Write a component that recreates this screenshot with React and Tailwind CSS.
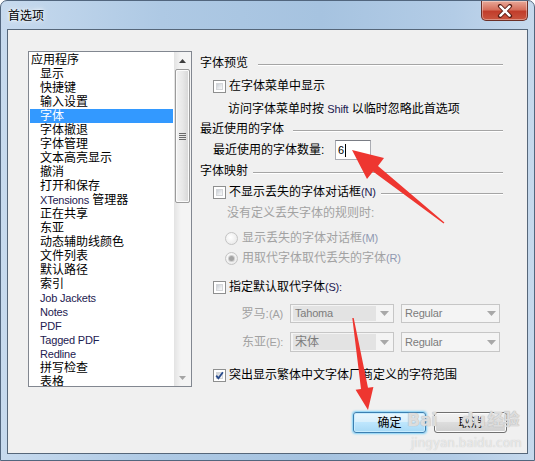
import React from 'react';

// Latin run (Tahoma-ish, slightly smaller than the CJK glyphs)
function L({ children, className = '' }) {
  return <span className={`text-[11px] tracking-[-0.2px] ${className}`}>{children}</span>;
}

function Check({ checked }) {
  return (
    <div className="relative h-[13px] w-[13px] shrink-0 border border-[#8e8f8f] bg-white p-[2px]">
      <div className="h-full w-full border border-[#d4d6d9] bg-[linear-gradient(135deg,#c9ced4,#eef0f2_70%,#f8f8f8)]" />
      {checked && (
        <svg className="absolute left-0 top-0" width="11" height="11" viewBox="0 0 11 11">
          <path d="M2.2 5.6 L4.4 8.2 L8.9 2.2" fill="none" stroke="#2a4c8c" strokeWidth="1.8" />
        </svg>
      )}
    </div>
  );
}

function Radio({ checked }) {
  return (
    <div className="flex h-[13px] w-[13px] shrink-0 items-center justify-center rounded-full border border-[#c4c4c4] bg-[radial-gradient(circle_at_40%_40%,#ffffff,#e4e4e4)]">
      {checked && <div className="h-[5px] w-[5px] rounded-full bg-[#a3a3a3] shadow-[0_0_0_1px_#cfcfcf]" />}
    </div>
  );
}

function Arrow() {
  return (
    <svg width="9" height="5" viewBox="0 0 9 5">
      <path d="M0 0 L9 0 L4.5 5 Z" fill="#a8a8a8" />
    </svg>
  );
}

function Header({ label, gap }) {
  return (
    <div className="flex h-[20px] items-center">
      <span>{label}</span>
      <div className={`mt-[2px] h-px flex-1 bg-[#a5a5a5] shadow-[0_1px_0_#ffffff] ${gap}`} />
    </div>
  );
}

const items = [
  { t: '应用程序', top: true },
  { t: '显示' },
  { t: '快捷键' },
  { t: '输入设置' },
  { t: '字体', sel: true },
  { t: '字体撤退' },
  { t: '字体管理' },
  { t: '文本高亮显示' },
  { t: '撤消' },
  { t: '打开和保存' },
  { t: <><L className="text-[#1d2050]">XTensions</L> 管理器</> },
  { t: '正在共享' },
  { t: '东亚' },
  { t: '动态辅助线颜色' },
  { t: '文件列表' },
  { t: '默认路径' },
  { t: '索引' },
  { t: <L className="text-[#1d2050]">Job Jackets</L> },
  { t: <L className="text-[#1d2050]">Notes</L> },
  { t: <L className="text-[#1d2050]">PDF</L> },
  { t: <L className="text-[#1d2050]">Tagged PDF</L> },
  { t: <L className="text-[#1d2050]">Redline</L> },
  { t: '拼写检查' },
  { t: '表格' },
];

export default function App() {
  return (
    <div className="relative h-[461px] w-[535px] overflow-hidden rounded-t-[7px] border border-[#52667e] bg-[linear-gradient(90deg,#c7daee_0%,#aec9e4_30%,#a6c3e0_60%,#b3cce6_85%,#c6d9ed_100%)] font-['Liberation_Sans','Noto_Sans_CJK_SC',sans-serif] text-[12px] text-black">
      {/* title bar */}
      <div className="flex h-[28px] items-start justify-between">
        <div className="pl-[7px] pt-[7px] leading-[16px] [text-shadow:0_0_6px_#fff,0_0_3px_#fff]">首选项</div>
        <div className="mr-[6px] flex h-[20px] w-[47px] items-center justify-center rounded-b-[5px] border border-t-0 border-[#6b2f27] bg-[linear-gradient(180deg,#e8a898_0%,#d6705d_45%,#c13d2b_55%,#c9553f_100%)] shadow-[inset_0_0_0_1px_rgba(255,255,255,0.35)]">
          <svg width="16" height="14" viewBox="0 0 16 14">
            <path d="M3 2 L13 12 M13 2 L3 12" stroke="#5a1c14" strokeWidth="4.2" strokeLinecap="round" />
            <path d="M3.4 2.4 L12.6 11.6 M12.6 2.4 L3.4 11.6" stroke="#ffffff" strokeWidth="2.4" strokeLinecap="round" />
          </svg>
        </div>
      </div>

      {/* client area */}
      <div className="mx-[6px] h-[425px] border border-[#56677a] bg-[#f0f0f0] pl-[20px] pt-[21px]">
        <div className="flex">
          {/* category list */}
          <div className="flex h-[336px] w-[164px] shrink-0 border border-[#828790] bg-white">
            <div className="flex-1 overflow-hidden pt-[1px] leading-[14px]">
              {items.map((it, i) => (
                <div
                  key={i}
                  className={`mx-[1px] h-[14px] whitespace-nowrap ${it.top ? 'pl-[1px]' : 'pl-[10px]'} ${it.sel ? 'bg-[#3399ff] text-white' : ''}`}
                >
                  {it.t}
                </div>
              ))}
            </div>
            {/* scrollbar */}
            <div className="flex w-[17px] flex-col bg-[linear-gradient(90deg,#e3e3e3,#f4f4f4_40%,#f4f4f4)]">
              <div className="flex h-[17px] items-center justify-center">
                <svg width="7" height="4" viewBox="0 0 7 4"><path d="M0 4 L3.5 0 L7 4 Z" fill="#3f3f3f" /></svg>
              </div>
              <div className="mx-[1px] flex h-[134px] items-center justify-center rounded-[2px] border border-[#9b9b9b] bg-[linear-gradient(90deg,#f3f3f3,#e8e8e8_50%,#d6d6d6)] shadow-[inset_0_0_0_1px_#fbfbfb]">
                <div className="flex w-[7px] flex-col gap-[1px]">
                  <div className="h-px bg-[#6a6a6a]" />
                  <div className="h-px bg-[#6a6a6a]" />
                  <div className="h-px bg-[#6a6a6a]" />
                  <div className="h-px bg-[#6a6a6a]" />
                </div>
              </div>
              <div className="flex-1" />
              <div className="flex h-[17px] items-center justify-center">
                <svg width="7" height="4" viewBox="0 0 7 4"><path d="M0 0 L7 0 L3.5 4 Z" fill="#a5a5a5" /></svg>
              </div>
            </div>
          </div>

          {/* settings panel */}
          <div className="ml-[8px] flex w-[303px] flex-col">
            <div className="mt-[2px]"><Header label="字体预览" gap="ml-[10px]" /></div>
            <div className="mt-[3px] flex h-[20px] items-center pl-[13px]">
              <Check />
              <span className="ml-[3px]">在字体菜单中显示</span>
            </div>
            <div className="mt-[3px] flex h-[20px] items-center pl-[28px]">
              访问字体菜单时按&nbsp;<L className="text-[#1d2050]">Shift</L>&nbsp;以临时忽略此首选项
            </div>
            <Header label="最近使用的字体" gap="ml-[9px]" />
            <div className="mt-[1px] flex h-[20px] items-center pl-[13px]">
              <span className="w-[122px]">最近使用的字体数量:</span>
              <div className="flex h-[20px] w-[36px] items-center border border-[#abadb3] border-t-[#7a7d85] bg-white pl-[2px]">
                <L>6</L>
                <div className="ml-[1px] h-[13px] w-px bg-black" />
              </div>
            </div>
            <div className="mt-[1px]"><Header label="字体映射" gap="ml-[5px]" /></div>
            <div className="mt-[1px] flex h-[20px] items-center pl-[13px]">
              <Check />
              <span className="ml-[3px]">不显示丢失的字体对话框<L className="text-[#1d2050]">(N)</L></span>
              <div className="ml-[5px] mt-[2px] h-px flex-1 bg-[#a5a5a5] shadow-[0_1px_0_#ffffff]" />
            </div>
            <div className="mt-[1px] flex h-[20px] items-center pl-[27px] text-[#a2a2a2]">
              没有定义丢失字体的规则时:
            </div>
            <div className="mt-[5px] flex h-[20px] items-center pl-[25px] text-[#a2a2a2]">
              <Radio />
              <span className="ml-[4px]">显示丢失的字体对话框<L className="text-[#8f98b0]">(M)</L></span>
            </div>
            <div className="flex h-[20px] items-center pl-[25px] text-[#a2a2a2]">
              <Radio checked />
              <span className="ml-[4px]">用取代字体取代丢失的字体<L className="text-[#8f98b0]">(R)</L></span>
            </div>
            <div className="mt-[9px] flex h-[20px] items-center pl-[13px]">
              <Check />
              <span className="ml-[3px]">指定默认取代字体<L className="text-[#1d2050]">(S):</L></span>
            </div>
            <div className="mt-[7px] flex h-[19px] items-center pl-[33px]">
              <span className="w-[50px] text-right text-[#a2a2a2]">罗马:<L>(A)</L></span>
              <div className="ml-[7px] flex h-[19px] w-[104px] items-center border border-[#c6c6c6] bg-[#f4f4f4] pl-[2px]">
                <div className="h-[15px] w-[83px] bg-[#e3e3e3] pl-[2px] leading-[15px] text-[#7c7c7c]"><L>Tahoma</L></div>
                <div className="flex flex-1 justify-center"><Arrow /></div>
              </div>
              <div className="ml-[7px] flex h-[19px] w-[99px] items-center border border-[#c6c6c6] bg-[#f4f4f4] pl-[3px] text-[#7c7c7c]">
                <L>Regular</L>
                <div className="ml-auto mr-[3px]"><Arrow /></div>
              </div>
            </div>
            <div className="mt-[9px] flex h-[20px] items-center pl-[33px]">
              <span className="w-[50px] text-right text-[#a2a2a2]">东亚<L>(E):</L></span>
              <div className="ml-[7px] flex h-[20px] w-[104px] items-center border border-[#c6c6c6] bg-[#f4f4f4] pl-[2px]">
                <div className="h-[16px] w-[83px] bg-[#e3e3e3] pl-[2px] leading-[16px] text-[#7c7c7c]">宋体</div>
                <div className="flex flex-1 justify-center"><Arrow /></div>
              </div>
              <div className="ml-[7px] flex h-[20px] w-[99px] items-center border border-[#c6c6c6] bg-[#f4f4f4] pl-[3px] text-[#7c7c7c]">
                <L>Regular</L>
                <div className="ml-auto mr-[3px]"><Arrow /></div>
              </div>
            </div>
            <div className="mt-[13px] flex h-[20px] items-center pl-[13px]">
              <Check checked />
              <span className="ml-[3px]">突出显示繁体中文字体厂商定义的字符范围</span>
            </div>
          </div>
        </div>

        {/* buttons */}
        <div className="mt-[25px] flex justify-end gap-[8px] pr-[20px]">
          <div className="flex h-[21px] w-[73px] items-center justify-center rounded-[3px] border border-[#3c7fb1] bg-[linear-gradient(180deg,#eaf6fd_0%,#d9f0fc_45%,#bee6fd_50%,#a7d9f5_100%)] shadow-[0_0_2px_1px_#7fd0f7,inset_0_0_0_1px_#c7ecfe]">
            确定
          </div>
          <div className="flex h-[21px] w-[73px] items-center justify-center rounded-[3px] border border-[#707070] bg-[linear-gradient(180deg,#f2f2f2_0%,#ebebeb_45%,#dddddd_50%,#cfcfcf_100%)] shadow-[inset_0_0_0_1px_#fcfcfc]">
            取消
          </div>
        </div>
      </div>

      {/* baidu watermark */}
      <div className="pointer-events-none absolute left-[406px] top-[409px] flex items-end gap-[2px] font-['DejaVu_Sans','Noto_Sans_CJK_SC',sans-serif] text-[17px] font-bold leading-[20px] text-[rgba(240,240,240,0.7)] [text-shadow:0_0_1px_#b4b4b4,0_0_1px_#b4b4b4]">
        <span>Bai</span>
        <span className="ml-[22px]">du</span>
        <span className="text-[16px]">经验</span>
      </div>
      <div className="pointer-events-none absolute left-[410px] top-[435px] font-['DejaVu_Sans',sans-serif] text-[12px] leading-[14px] text-[rgba(242,242,242,0.8)] [text-shadow:0_0_1px_#bcbcbc]">
        jingyan.baidu.com
      </div>

      {/* red annotation arrows */}
      <svg className="pointer-events-none absolute -left-px -top-px" width="535" height="461" viewBox="0 0 535 461">
        <polygon
          points="352,150 384,158 378,166 444.4,222.4 443.6,223.6 373,171.5 367,179"
          fill="#ee3630"
        />
        <polygon
          points="368,410 355.6,389.7 361,388.9 352.3,318.1 353.7,317.9 368,387.7 373.4,386.9"
          fill="#ee3630"
        />
      </svg>
    </div>
  );
}
